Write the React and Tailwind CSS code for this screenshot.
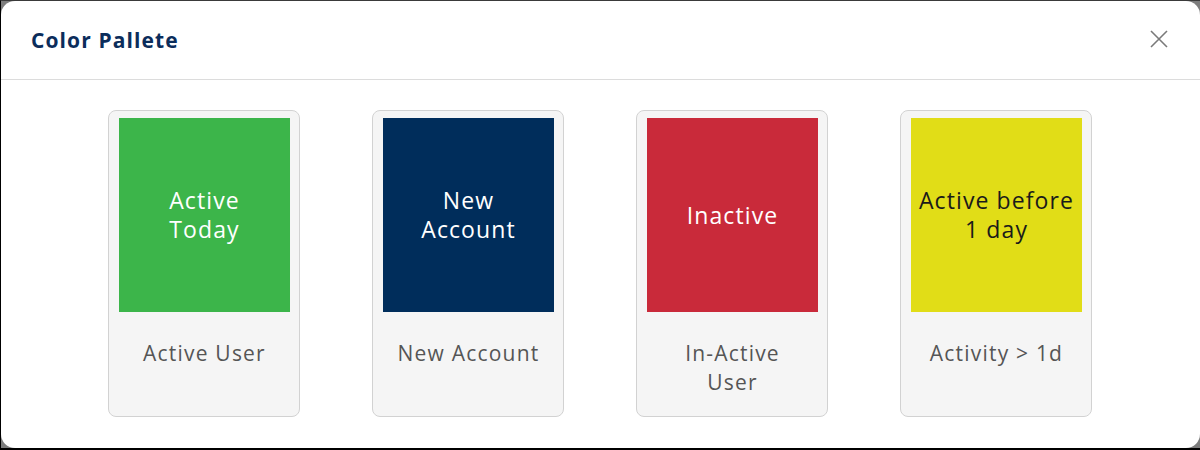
import React from "react";

const items = [
  { box: "Active\nToday", label: "Active User", bg: "bg-[#3cb54a]", fg: "text-white" },
  { box: "New\nAccount", label: "New Account", bg: "bg-[#002d5b]", fg: "text-white" },
  { box: "Inactive", label: "In-Active\nUser", bg: "bg-[#c92a3a]", fg: "text-white" },
  { box: "Active before\n1 day", label: "Activity > 1d", bg: "bg-[#e1dd17]", fg: "text-[#1a1a1a]" },
];

export default function App() {
  return (
    <div
      className="w-[1200px] h-[450px] bg-[#7d7d7d] border-t border-t-[#3a3a3a] border-l border-l-black border-b-2 border-b-black flex flex-col"
      style={{ fontFamily: '"Open Sans", "Noto Sans", sans-serif' }}
    >
      <div className="flex-1 bg-white rounded-[14px] flex flex-col overflow-hidden">
        <div className="h-[79px] flex items-center justify-between pl-[30px] pr-[32px] border-b border-[#dcdcdc]">
          <h1 className="text-[21px] font-bold text-[#0b2d5b] tracking-[1.1px] mt-[1px]">Color Pallete</h1>
          <svg width="18" height="18" viewBox="0 0 18 18" className="text-[#7a7a7a] -mt-[3px]">
            <path d="M1 1L17 17M17 1L1 17" stroke="currentColor" strokeWidth="1.6" />
          </svg>
        </div>
        <div className="flex justify-center gap-[72px] pt-[30px] pr-[1px]">
          {items.map((it) => (
            <div
              key={it.label}
              className="w-[192px] h-[307px] bg-[#f5f5f5] border border-[#d2d2d2] rounded-[8px] pt-[7px] pl-[10px] pr-[9px] flex flex-col"
            >
              <div className={`h-[194px] ${it.bg} ${it.fg} flex items-center justify-center text-center text-[23px] leading-[29px] tracking-[1.1px] whitespace-pre-line`}>
                {it.box}
              </div>
              <div className="mt-[27px] text-center text-[21px] leading-[29px] tracking-[1.2px] text-[#555555] whitespace-pre-line">
                {it.label}
              </div>
            </div>
          ))}
        </div>
      </div>
    </div>
  );
}
